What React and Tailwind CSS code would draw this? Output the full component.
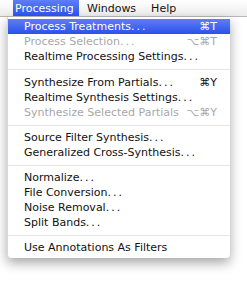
const items = [
  { label: 'Process Treatments', dots: true, key: '⌘T', active: true },
  { label: 'Process Selection', dots: true, key: '⌥⌘T', disabled: true },
  { label: 'Realtime Processing Settings', dots: true },
  { sep: true, h: 'h-[11px]' },
  { label: 'Synthesize From Partials', dots: true, key: '⌘Y' },
  { label: 'Realtime Synthesis Settings', dots: true },
  { label: 'Synthesize Selected Partials', key: '⌥⌘Y', disabled: true },
  { sep: true, h: 'h-[10px]' },
  { label: 'Source Filter Synthesis', dots: true },
  { label: 'Generalized Cross-Synthesis', dots: true },
  { sep: true, h: 'h-[10px]' },
  { label: 'Normalize', dots: true },
  { label: 'File Conversion', dots: true },
  { label: 'Noise Removal', dots: true },
  { label: 'Split Bands', dots: true },
  { sep: true, h: 'h-[10px]' },
  { label: 'Use Annotations As Filters' },
];

function MenuRow({ item }) {
  if (item.sep) {
    return (
      <div className={`${item.h} flex items-center`}>
        <div className="h-px w-full bg-[#e6e6e6]" />
      </div>
    );
  }
  const tone = item.active
    ? 'bg-linear-to-b from-[#5f7ef6] to-[#2a50ea] text-white'
    : item.disabled
    ? 'text-[#a8a8a8]'
    : 'text-[#111]';
  return (
    <div className={`h-[15px] flex items-center justify-between pl-[16px] pr-[13px] ${tone}`}>
      <span>
        {item.label}
        {item.dots && <span className="tracking-[2px]">...</span>}
      </span>
      {item.key && <span>{item.key}</span>}
    </div>
  );
}

export default function App() {
  return (
    <div
      className="w-[247px] h-[294px] bg-white overflow-hidden text-[11px] leading-none"
      style={{ fontFamily: '"DejaVu Sans", "Liberation Sans", sans-serif' }}
    >
      <div className="h-[17px] flex items-stretch bg-linear-to-b from-white to-[#ececec] border-b border-[#b8b8b8] text-[#111]">
        <div className="w-[13px]" />
        <div className="w-[66px] flex items-center pl-[2px] bg-linear-to-b from-[#5f7ef6] to-[#2a50ea] text-white">
          Processing
        </div>
        <div className="ml-[8px] flex items-center">Windows</div>
        <div className="ml-[15px] flex items-center">Help</div>
      </div>
      <div className="ml-[7px] w-[223px] pt-[2px] pb-[3px] bg-white rounded-b-[4px] border-l border-[#d8d8d8] shadow-[0_5px_12px_rgba(0,0,0,0.35)]">
        {items.map((it, i) => (
          <MenuRow key={i} item={it} />
        ))}
      </div>
    </div>
  );
}
